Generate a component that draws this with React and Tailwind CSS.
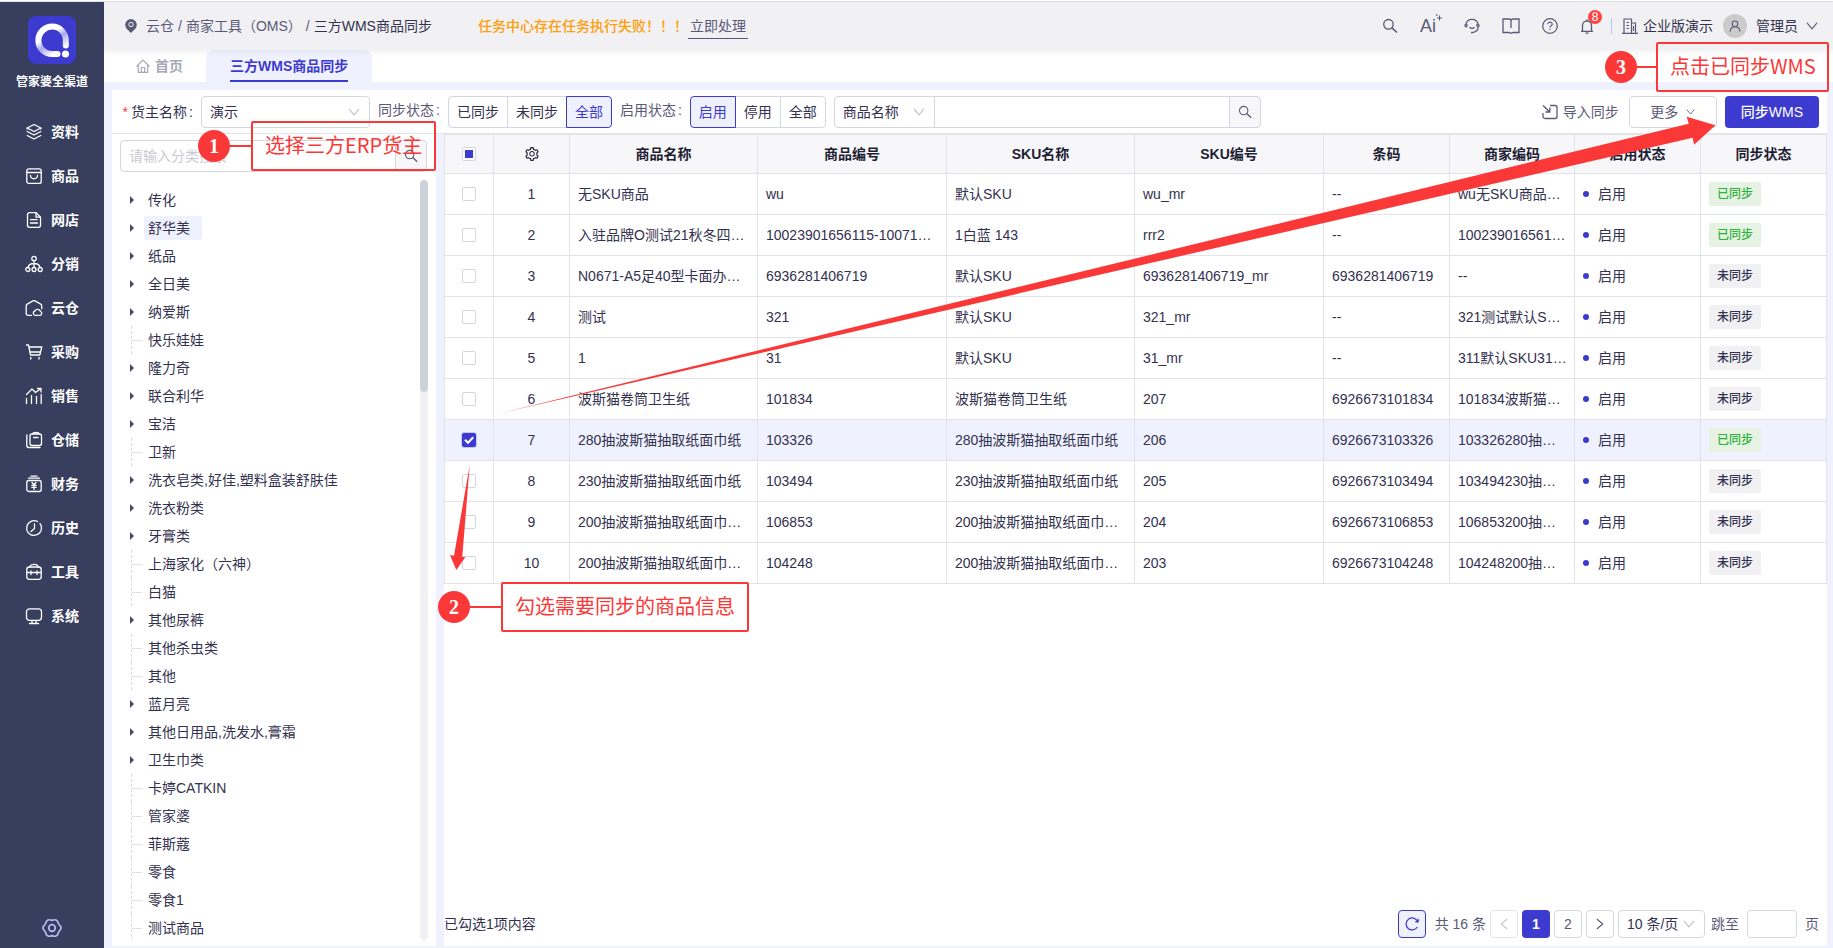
import { useState } from 'react';
import { AiOutlineSetting } from 'react-icons/ai';

const menuItems = [
  { name: '资料', icon: 'layers' },
  { name: '商品', icon: 'goods' },
  { name: '网店', icon: 'shop' },
  { name: '分销', icon: 'share' },
  { name: '云仓', icon: 'cloud' },
  { name: '采购', icon: 'cart' },
  { name: '销售', icon: 'sales' },
  { name: '仓储', icon: 'store' },
  { name: '财务', icon: 'finance' },
  { name: '历史', icon: 'history' },
  { name: '工具', icon: 'tools' },
  { name: '系统', icon: 'system' },
];

const categories = [
  { name: '传化', open: true },
  { name: '舒华美', open: true },
  { name: '纸品', open: true },
  { name: '全日美', open: true },
  { name: '纳爱斯', open: true },
  { name: '快乐娃娃' },
  { name: '隆力奇', open: true },
  { name: '联合利华', open: true },
  { name: '宝洁', open: true },
  { name: '卫新' },
  { name: '洗衣皂类,好佳,塑料盒装舒肤佳', open: true },
  { name: '洗衣粉类', open: true },
  { name: '牙膏类', open: true },
  { name: '上海家化（六神）' },
  { name: '白猫' },
  { name: '其他尿裤', open: true },
  { name: '其他杀虫类' },
  { name: '其他' },
  { name: '蓝月亮', open: true },
  { name: '其他日用品,洗发水,膏霜', open: true },
  { name: '卫生巾类', open: true },
  { name: '卡婷CATKIN' },
  { name: '管家婆' },
  { name: '菲斯蔻' },
  { name: '零食' },
  { name: '零食1' },
  { name: '测试商品' },
];

const columns = ['商品名称', '商品编号', 'SKU名称', 'SKU编号', '条码', '商家编码', '启用状态', '同步状态'];

const rows = [
  { id: 1, cells: ['无SKU商品', 'wu', '默认SKU', 'wu_mr', '--', 'wu无SKU商品…'], synced: true },
  { id: 2, cells: ['入驻品牌O测试21秋冬四…', '10023901656115-10071…', '1白蓝 143', 'rrr2', '--', '100239016561…'], synced: true },
  { id: 3, cells: ['N0671-A5足40型卡面办…', '6936281406719', '默认SKU', '6936281406719_mr', '6936281406719', '--'], synced: false },
  { id: 4, cells: ['测试', '321', '默认SKU', '321_mr', '--', '321测试默认S…'], synced: false },
  { id: 5, cells: ['1', '31', '默认SKU', '31_mr', '--', '311默认SKU31…'], synced: false },
  { id: 6, cells: ['波斯猫卷筒卫生纸', '101834', '波斯猫卷筒卫生纸', '207', '6926673101834', '101834波斯猫…'], synced: false },
  { id: 7, cells: ['280抽波斯猫抽取纸面巾纸', '103326', '280抽波斯猫抽取纸面巾纸', '206', '6926673103326', '103326280抽…'], synced: true },
  { id: 8, cells: ['230抽波斯猫抽取纸面巾纸', '103494', '230抽波斯猫抽取纸面巾纸', '205', '6926673103494', '103494230抽…'], synced: false },
  { id: 9, cells: ['200抽波斯猫抽取纸面巾…', '106853', '200抽波斯猫抽取纸面巾…', '204', '6926673106853', '106853200抽…'], synced: false },
  { id: 10, cells: ['200抽波斯猫抽取纸面巾…', '104248', '200抽波斯猫抽取纸面巾…', '203', '6926673104248', '104248200抽…'], synced: false },
];

const iconShapes = {
  layers: (
    <>
      <path d="M9 1.500 15.800 5 9 8.500 2.200 5Z" />
      <path d="M2.200 8.500 9 12l6.800-3.500" />
      <path d="M2.200 12.500 9 16l6.800-3.500M2.200 5v1M15.800 5v1" />
    </>
  ),
  goods: (
    <>
      <rect x="1.800" y="1.800" width="14.400" height="14.600" rx="2" />
      <path d="M1.800 5.500h14.400M5.500 8.500c.3 4.300 6.700 4.300 7 0" />
    </>
  ),
  shop: (
    <>
      <path d="M11 1.700H4.500a2 2 0 0 0-2 2v10.600a2 2 0 0 0 2 2h9a2 2 0 0 0 2-2V6.200Z" />
      <path d="M11 1.700v4.500h4.500M5.500 8.700h6.500M5.500 12h7" />
    </>
  ),
  share: (
    <>
      <circle cx="9" cy="3.500" r="2.200" />
      <circle cx="2.800" cy="14.500" r="2" />
      <circle cx="9" cy="14.500" r="2" />
      <circle cx="15.200" cy="14.500" r="2" />
      <path d="M9 5.700v6.800M3 12.500C3.500 9.500 6 8.500 9 8.500s5.500 1 6 4" />
    </>
  ),
  cloud: (
    <>
      <path d="M6.500 16.300H3a1.800 1.800 0 0 1-1.800-1.800V6.800a2 2 0 0 1 1-1.700L8 1.900a2 2 0 0 1 2 0l5.700 3.200a2 2 0 0 1 1 1.700v3" />
      <path d="M10.200 16.300a2.200 2.200 0 0 1-.3-4.300 3 3 0 0 1 5.600.5 2 2 0 0 1-.3 3.800Z" />
    </>
  ),
  cart: (
    <>
      <path d="M1.500 2h2l2 10h9.300L16.800 4H4" />
      <path d="M5 9h10" />
      <path d="M5.800 14.300v1.800M14 14.300v1.800" />
    </>
  ),
  sales: (
    <>
      <path d="M1.500 7.500 7 2l3.500 3.500L16 1.500M12.500 1.500H16V5" />
      <path d="M1.500 11.500v5M6.500 8.500v8M11.500 9.500v7M16.200 7.500v9" />
    </>
  ),
  store: (
    <>
      <rect x="5" y="3" width="11.500" height="11.500" rx="2" />
      <path d="M7.500 3c0-2 6.500-2 6.500 0M8.500 6.500h4.500M1.800 4v10.500a2 2 0 0 0 2 2H15" />
    </>
  ),
  finance: (
    <>
      <rect x="1.800" y="5.500" width="14.400" height="11" rx="2" />
      <path d="M3.500 3.200h11M6 1.200h6M7 7.500l2 2.300 2-2.300M9 9.800v4.700M6.800 10.300h4.400M6.800 12.300h4.400" />
    </>
  ),
  history: (
    <>
      <path d="M16.300 7.500A7.400 7.400 0 1 1 12.500 2.500M15 4.500l1.500 3" />
      <path d="M9.500 5v4.500L6 12.500" />
    </>
  ),
  tools: (
    <>
      <rect x="1.800" y="4" width="14.400" height="12.300" rx="2.500" />
      <path d="M5 4c0-3.500 8-3.500 8 0M1.800 9.500h14.400M6 8v3.500M12 8v3.500" />
    </>
  ),
  system: (
    <>
      <rect x="1.500" y="1.800" width="15" height="11.500" rx="3" />
      <path d="M4.500 16.500h9M7 13.500v2.800M11 13.500v2.800" />
    </>
  ),
};

function MenuIcon({ name }) {
  return (
    <svg viewBox="0 0 18 18" className="w-[18px] h-[18px] shrink-0" fill="none" stroke="currentColor" strokeWidth="1.3" strokeLinecap="round" strokeLinejoin="round">
      {iconShapes[name]}
    </svg>
  );
}

function Chevron({ className }) {
  return (
    <svg viewBox="0 0 12 8" className={className} fill="none" stroke="currentColor" strokeWidth="1.1">
      <path d="M1 .8 6 6.800 11 .8" />
    </svg>
  );
}

function SearchIcon({ className }) {
  return (
    <svg viewBox="0 0 16 16" className={className} fill="none" stroke="currentColor" strokeWidth="1.3">
      <circle cx="6.500" cy="6.300" r="4.800" />
      <path d="m10 9.800 5 4.700" strokeWidth="1.600" />
    </svg>
  );
}

function GearIcon({ className }) {
  return (
    <svg viewBox="0 0 20 20" className={className} fill="none" stroke="currentColor" strokeWidth="1.700" strokeLinejoin="round">
      <path d="M16.600 13.800Q15.700 19.900 10 17.600 4.300 19.900 3.400 13.800-1.400 10 3.400 6.200 4.300.1 10 2.400 15.700.1 16.600 6.200 21.400 10 16.600 13.800Z" />
      <circle cx="10" cy="10" r="3.300" />
    </svg>
  );
}

function Logo() {
  return (
    <svg viewBox="0 0 48 48" className="w-12 h-12">
      <defs>
        <linearGradient id="ring" x1="0" y1="0.1" x2="0.6" y2="1">
          <stop offset="0.35" stopColor="#fff" />
          <stop offset="0.6" stopColor="#a9a8ee" />
          <stop offset="1" stopColor="#fff" />
        </linearGradient>
      </defs>
      <rect width="48" height="48" rx="8" fill="#3d3acf" />
      <path d="M37.800 29.500V24.500A13.700 13.700 0 1 0 24 38h5.500" fill="none" stroke="url(#ring)" strokeWidth="6" strokeLinecap="round" />
      <circle cx="37.500" cy="38" r="3.500" fill="#fff" />
    </svg>
  );
}

function Sidebar() {
  return (
    <aside className="flex w-26 shrink-0 flex-col items-center bg-[#373e5e] pt-[14px] pb-[10px] text-white">
      <Logo />
      <div className="mt-2 text-xs leading-5 font-bold">管家婆全渠道</div>
      <nav className="mt-[18px] w-full">
        {menuItems.map((item) => (
          <a key={item.name} href="#" className="flex h-11 items-center gap-2 pl-[25px] text-sm font-bold">
            <MenuIcon name={item.icon} />
            {item.name}
          </a>
        ))}
      </nav>
      <button type="button" aria-label="设置" className="mt-auto text-[#b4bcf5]">
        <GearIcon className="h-5 w-5" />
      </button>
    </aside>
  );
}

function HeaderBar() {
  return (
    <header className="relative z-10 flex h-12 shrink-0 items-center bg-[#f1f1f3] pr-[15px] pl-[21px] text-sm text-[#5b5978] shadow-[0_2px_6px_rgba(0,0,0,0.06)]">
      <svg viewBox="0 0 12 14" className="h-[14px] w-3" fill="#5b5978">
        <path d="M6 0a5.800 5.800 0 0 1 5.800 5.700C11.800 9.500 8 11.500 6 14 4 11.500.2 9.500.2 5.700A5.800 5.800 0 0 1 6 0Z" />
        <circle cx="6" cy="5.500" r="2.200" fill="none" stroke="#f1f1f3" />
      </svg>
      <div className="ml-[9px] flex gap-1 whitespace-nowrap">
        <a href="#">云仓</a>
        <span>/</span>
        <a href="#">商家工具（OMS）</a>
        <span>/</span>
        <span className="text-[#33314f]">三方WMS商品同步</span>
      </div>
      <div className="ml-[46px] flex items-center whitespace-nowrap">
        <span className="font-medium text-[#ff9d0a]">任务中心存在任务执行失败！！！</span>
        <a href="#" className="border-b border-[#5b5978] px-[2px] leading-6">立即处理</a>
      </div>

      <div className="ml-auto flex items-center gap-[22px]">
        <button type="button" aria-label="搜索"><SearchIcon className="h-4 w-4" /></button>
        <button type="button" className="flex items-start text-lg leading-6">
          Ai
          <svg viewBox="0 0 6 8" className="h-2 w-[6px]" stroke="currentColor" fill="none">
            <path d="M3.500 1.500v5M1 4h5M.8 0v2" />
          </svg>
        </button>
        <button type="button" aria-label="客服">
          <svg viewBox="0 0 16 16" className="h-4 w-4" fill="none" stroke="currentColor" strokeWidth="1.300">
            <path d="M1.800 6.500a6.300 6.300 0 0 1 12.400 0M1 7.500c0-2 2.500-1.500 2 .3S1 9 1 7.500ZM15 7.500c0-2-2.500-1.500-2 .3s2 1.200 2-.3ZM14.200 9.500c-.5 3-2.700 4.700-5.700 5H7M5.500 9.300c1.300 1.500 3.700 1.500 5 0" />
          </svg>
        </button>
        <button type="button" aria-label="手册">
          <svg viewBox="0 0 18 16" className="h-4 w-[18px]" fill="none" stroke="currentColor" strokeWidth="1.300">
            <path d="M1 1h5.500C8 1 9 1.500 9 2.500 9 1.500 10 1 11.500 1H17v13.500h-6l-2 .8-2-.8H1ZM9 2.500V10" />
          </svg>
        </button>
        <button type="button" aria-label="帮助">
          <svg viewBox="0 0 16 16" className="h-4 w-4" fill="none" stroke="currentColor" strokeWidth="1.200">
            <circle cx="8" cy="8" r="7.300" />
            <path d="M5.800 6.300C5.800 3.300 10.300 3.500 10.200 6.200 10.100 7.800 8 7.800 8 9.600M8 10.800v1.300" />
          </svg>
        </button>
        <button type="button" aria-label="通知" className="relative">
          <svg viewBox="0 0 14 16" className="h-4 w-[14px]" fill="none" stroke="currentColor" strokeWidth="1.300">
            <path d="M1 13.300h12M2.500 13V7.500a4.500 4.500 0 0 1 9 0V13M7 1.200V3M5.500 15.200h3" />
          </svg>
          <span className="absolute -top-2 left-2 grid h-[14px] w-[14px] place-items-center rounded-full bg-[#fb4444] text-xs leading-none text-white">8</span>
        </button>
      </div>
      <div className="ml-[17px] h-4 w-px bg-[#bcc3f5]" />
      <svg viewBox="0 0 16 16" className="ml-[10px] h-4 w-4" fill="none" stroke="currentColor" strokeWidth="1.200">
        <path d="M0 15.300h16M2 15V1h7.500v14M9.500 5h4v10M4.500 4.500H7M4.500 7.500H7M4.500 10.500H7M11.500 8v5" />
      </svg>
      <span className="ml-[5px] text-[#33314f]">企业版演示</span>
      <span className="ml-[10px] grid h-6 w-6 place-items-center rounded-full bg-[#cbcbcb]">
        <svg viewBox="0 0 12 12" className="h-3 w-3" fill="none" stroke="currentColor" strokeWidth="1.100">
          <circle cx="6" cy="3.800" r="2.800" />
          <path d="M1 11.700c.3-3 2.300-5 5-5s4.700 2 5 5" />
        </svg>
      </span>
      <span className="ml-[9px] text-[#33314f]">管理员</span>
      <Chevron className="ml-2 h-2 w-3" />
    </header>
  );
}

function TabBar() {
  return (
    <div className="flex h-8 shrink-0 items-stretch bg-white text-sm font-bold">
      <a href="#" className="flex w-[102px] items-center gap-[5px] pl-8 text-[#a7a8b8]">
        <svg viewBox="0 0 14 14" className="h-[14px] w-[14px]" fill="none" stroke="currentColor" strokeWidth="1.200">
          <path d="M.5 7.500 7 1l6.500 6.500M2.300 6v7.300h9.400V6M5.300 13V8.500h3.400V13" />
        </svg>
        首页
      </a>
      <a href="#" className="flex rounded-t-lg bg-[#eff1ff] px-6 text-[#3d3acf]">
        <span className="border-b-2 border-[#3d3acf] leading-8">三方WMS商品同步</span>
      </a>
    </div>
  );
}

function ButtonGroup({ label, options, value, onChange }) {
  return (
    <div role="group" aria-label={label} className="flex">
      {options.map((option) => (
        <button
          key={option}
          type="button"
          onClick={() => onChange(option)}
          className={`-ml-px h-8 border px-2 first:ml-0 first:rounded-l last:rounded-r ${
            value === option ? 'relative border-[#3d3acf] bg-[#eff1ff] text-[#3d3acf]' : 'border-[#d5d5df] bg-white text-[#33314f]'
          }`}
        >
          {option}
        </button>
      ))}
    </div>
  );
}

function FilterBar() {
  const [sync, setSync] = useState('全部');
  const [enabled, setEnabled] = useState('启用');

  return (
    <div className="flex h-11 shrink-0 items-center border-b border-[#e3e3ea] bg-white px-2 text-sm whitespace-nowrap text-[#5b5978]">
      <label htmlFor="owner" className="flex w-[81px] gap-[2px] text-[#33314f]">
        <span className="mr-px w-2 text-right text-[#f53f3f]">*</span>
        货主名称<span>:</span>
      </label>
      <div className="relative">
        <select id="owner" className="h-8 w-[169px] appearance-none rounded border border-[#d5d5df] bg-white px-2 text-[#33314f]">
          <option>演示</option>
        </select>
        <Chevron className="pointer-events-none absolute top-3 right-[10px] h-2 w-3 text-[#c0c0ca]" />
      </div>
      <span className="mr-2 ml-2 flex gap-[2px] pb-1">同步状态<span>:</span></span>
      <ButtonGroup label="同步状态" options={['已同步', '未同步', '全部']} value={sync} onChange={setSync} />
      <span className="mr-2 ml-2 flex gap-[2px] pb-1">启用状态<span>:</span></span>
      <ButtonGroup label="启用状态" options={['启用', '停用', '全部']} value={enabled} onChange={setEnabled} />
      <div className="ml-2 flex">
        <div className="relative">
          <select aria-label="搜索字段" className="h-8 w-[101px] appearance-none rounded-l border border-[#d5d5df] bg-white px-2 text-[#33314f]">
            <option>商品名称</option>
          </select>
          <Chevron className="pointer-events-none absolute top-3 right-[10px] h-2 w-3 text-[#c0c0ca]" />
        </div>
        <input type="text" aria-label="商品搜索" className="-ml-px h-8 w-[296px] border border-[#d5d5df] bg-white px-2" />
        <button type="button" aria-label="查询" className="-ml-px grid h-8 w-8 place-items-center rounded-r border border-[#d5d5df] bg-[#f7f7fa]">
          <SearchIcon className="h-[14px] w-[14px]" />
        </button>
      </div>
      <div className="ml-auto flex items-center">
        <button type="button" className="flex items-center gap-[5px]">
          <svg viewBox="0 0 16 16" className="h-4 w-4" fill="none" stroke="currentColor" strokeWidth="1.300">
            <path d="M8 1.500h5a2 2 0 0 1 2 2v9a2 2 0 0 1-2 2H3a2 2 0 0 1-2-2V9M1 1.500l6.500 6.300M7.800 3.500V8H3.500" />
          </svg>
          导入同步
        </button>
        <button type="button" className="ml-[10px] flex h-8 w-22 items-center justify-center gap-2 rounded border border-[#d5d5df] bg-white">
          更多
          <Chevron className="h-[6px] w-[9px]" />
        </button>
        <button type="button" className="ml-2 h-8 rounded bg-[#3d3acf] px-4 font-medium text-white">同步WMS</button>
      </div>
    </div>
  );
}

function CategoryPanel() {
  return (
    <section className="flex w-[324px] shrink-0 flex-col bg-white px-2 pt-[6px] pb-[6px] text-sm text-[#33314f]">
      <div className="flex w-[307px]">
        <input
          type="text"
          aria-label="分类搜索"
          placeholder="请输入分类搜索"
          className="h-8 min-w-0 flex-1 rounded-l border border-[#d5d5df] px-2 text-sm placeholder-[#c9c9d3]"
        />
        <button type="button" aria-label="搜索分类" className="-ml-px grid h-8 w-8 place-items-center rounded-r border border-[#d5d5df] bg-[#f7f7fa] text-[#5b5978]">
          <SearchIcon className="h-[14px] w-[14px]" />
        </button>
      </div>
      <div className="mt-2 flex min-h-0 flex-1">
        <ul className="flex-1 overflow-hidden pt-[6px]">
          {categories.map((item) => (
            <li key={item.name} className="flex h-7 items-center">
              <span className="flex h-full w-6 items-center pl-[10px]">
                {item.open ? (
                  <svg viewBox="0 0 4 8" className="h-2 w-1" fill="#4b4967">
                    <path d="M0 0 4 4 0 8Z" />
                  </svg>
                ) : (
                  <span className="ml-px flex h-full w-[11px] items-center border-l border-dashed border-[#dcdce2]">
                    <span className="w-full border-t border-dashed border-[#dcdce2]" />
                  </span>
                )}
              </span>
              <span className={`rounded-xs pr-3 pl-1 leading-6 ${item.name === '舒华美' ? 'bg-[#eff1ff]' : ''}`}>{item.name}</span>
            </li>
          ))}
        </ul>
        <div className="w-2 rounded-full bg-[#f0f0f5]">
          <div className="h-[212px] rounded-full bg-[#ccd2da]" />
        </div>
      </div>
    </section>
  );
}

function RowCheckbox({ label, checked, mixed, onChange }) {
  return (
    <label className="relative mx-auto block h-[14px] w-[14px]">
      <input
        type="checkbox"
        aria-label={label}
        checked={checked}
        onChange={onChange}
        className={`block h-[14px] w-[14px] appearance-none rounded-xs border ${
          checked ? 'border-[#3d3acf] bg-[#3d3acf] ring-1 ring-[#c5c7f7]' : 'border-[#d5d5df] bg-white'
        }`}
      />
      {checked && (
        <svg viewBox="0 0 14 14" className="pointer-events-none absolute inset-0" fill="none" stroke="#fff" strokeWidth="2">
          <path d="m3 6.800 3 3 5.200-5.600" />
        </svg>
      )}
      {mixed && <span className="pointer-events-none absolute inset-[3px] bg-[#3d3acf]" />}
    </label>
  );
}

function ProductTable({ selected, onToggle }) {
  return (
    <table className="w-full table-fixed border-separate border-spacing-0 border-t border-l border-[#e3e3ea] text-sm text-[#33314f]">
      <colgroup>
        <col className="w-[49px]" />
        <col className="w-[76px]" />
        <col className="w-[188px]" />
        <col className="w-[189px]" />
        <col className="w-[188px]" />
        <col className="w-[189px]" />
        <col className="w-[126px]" />
        <col className="w-[125px]" />
        <col className="w-[126px]" />
        <col className="w-[126px]" />
      </colgroup>
      <thead>
        <tr className="h-[39px] bg-[#f7f7fa] text-[#1e1d33]">
          <th className="border-r border-b border-[#e3e3ea]">
            <RowCheckbox label="全选" checked={false} mixed={selected.length > 0} onChange={() => {}} />
          </th>
          <th className="border-r border-b border-[#e3e3ea]">
            <AiOutlineSetting className="mx-auto h-4 w-4" />
          </th>
          {columns.map((name) => (
            <th key={name} className="border-r border-b border-[#e3e3ea] font-bold">{name}</th>
          ))}
        </tr>
      </thead>
      <tbody>
        {rows.map((row) => (
          <tr key={row.id} className={`h-[41px] ${selected.includes(row.id) ? 'bg-[#eff1ff]' : ''}`}>
            <td className="border-r border-b border-[#e3e3ea]">
              <RowCheckbox label={`选择第${row.id}行`} checked={selected.includes(row.id)} onChange={() => onToggle(row.id)} />
            </td>
            <td className="border-r border-b border-[#e3e3ea] text-center">{row.id}</td>
            {row.cells.map((cell, index) => (
              <td key={index} className="border-r border-b border-[#e3e3ea] pl-2 whitespace-nowrap">{cell}</td>
            ))}
            <td className="border-r border-b border-[#e3e3ea] pl-2">
              <span className="flex items-center gap-[9px]">
                <span className="h-[6px] w-[6px] rounded-full bg-[#3d3acf]" />
                启用
              </span>
            </td>
            <td className="border-r border-b border-[#e3e3ea] pl-2">
              <span className={`block w-[52px] rounded-xs text-center text-xs leading-6 font-medium ${row.synced ? 'bg-[#e5f2e4] text-[#31b33a]' : 'bg-[#f1f1f4]'}`}>
                {row.synced ? '已同步' : '未同步'}
              </span>
            </td>
          </tr>
        ))}
      </tbody>
    </table>
  );
}

function Pagination({ count }) {
  return (
    <div className="mt-auto flex items-center pr-2 pb-2 text-sm text-[#5b5978]">
      <span className="text-[#33314f]">已勾选{count}项内容</span>
      <button type="button" aria-label="刷新" className="ml-auto grid h-7 w-7 place-items-center rounded border border-[#3d3acf] bg-[#eff1ff] text-[#3d3acf]">
        <svg viewBox="0 0 14 14" className="h-[14px] w-[14px]" fill="none" stroke="currentColor" strokeWidth="1.200">
          <path d="M12.300 10A6 6 0 1 1 12.500 4.300M13.200 1.800v3h-3" />
        </svg>
      </button>
      <span className="mr-1 ml-[9px]">共 16 条</span>
      <div className="flex gap-1">
        <button type="button" disabled aria-label="上一页" className="grid h-7 w-7 place-items-center rounded border border-[#e3e3ea] text-[#c5c5cf]">
          <Chevron className="h-2 w-3 rotate-90" />
        </button>
        <button type="button" className="h-7 w-7 rounded bg-[#3d3acf] font-bold text-white">1</button>
        <button type="button" className="h-7 w-7 rounded border border-[#d5d5df]">2</button>
        <button type="button" aria-label="下一页" className="grid h-7 w-7 place-items-center rounded border border-[#d5d5df]">
          <Chevron className="h-2 w-3 -rotate-90" />
        </button>
        <div className="relative">
          <select aria-label="每页条数" className="h-7 w-[87px] appearance-none rounded border border-[#d5d5df] bg-white px-2 text-[#33314f]">
            <option>10 条/页</option>
          </select>
          <Chevron className="pointer-events-none absolute top-[10px] right-[10px] h-2 w-3 text-[#c0c0ca]" />
        </div>
      </div>
      <label htmlFor="jump" className="mr-2 ml-[6px]">跳至</label>
      <input id="jump" type="text" className="h-7 w-[50px] rounded border border-[#d5d5df] px-2" />
      <span className="ml-2">页</span>
    </div>
  );
}

// Numbered step: a round badge, a connector and an outlined hint
function Callout({ number, className, lineClass, boxClass, children }) {
  return (
    <div className={`pointer-events-none absolute z-30 flex items-center text-[#fb3838] ${className}`}>
      <span className="grid h-8 w-8 place-items-center rounded-full bg-[#fb3838] font-['Liberation_Serif',serif] text-xl leading-none font-bold text-white">{number}</span>
      <span className={`h-[2px] bg-[#fb3838] ${lineClass}`} />
      <span className={`h-[50px] rounded-xs border-2 border-[#fb3838] pt-[6px] font-['Noto_Sans_CJK_SC',sans-serif] text-xl leading-8 whitespace-nowrap ${boxClass}`}>{children}</span>
    </div>
  );
}

function Guide() {
  return (
    <>
      <svg viewBox="0 0 1833 948" className="pointer-events-none absolute top-0 left-0 z-20 h-[948px] w-[1833px]">
        <defs>
          <linearGradient id="tail" gradientUnits="userSpaceOnUse" x1="493" y1="415" x2="560" y2="399">
            <stop offset="0" stopColor="#fb3838" stopOpacity="0.4" />
            <stop offset="1" stopColor="#fb3838" />
          </linearGradient>
        </defs>
        <path fill="url(#tail)" d="M493 414 1688.700 122.700 1686.700 115.700 1715.500 124.300 1694 143.700 1692.700 136.700Z" />
        <path fill="#fb3838" d="M469.700 464 462.300 555.700 465.300 556.300 456.300 569 450 554 454 554.800Z" />
      </svg>
      <Callout number={1} className="top-[120px] left-[198px]" lineClass="w-[21px]" boxClass="w-[185px] pl-3">选择三方ERP货主</Callout>
      <Callout number={2} className="top-[581px] left-[438px]" lineClass="w-[31px]" boxClass="w-[248px] pl-3">勾选需要同步的商品信息</Callout>
      <Callout number={3} className="top-[41px] left-[1605px]" lineClass="w-[19px]" boxClass="w-[173px] pl-3">点击已同步WMS</Callout>
    </>
  );
}

export default function App() {
  const [selected, setSelected] = useState([7]);

  const toggleRow = (id) => {
    setSelected(selected.includes(id) ? selected.filter((item) => item !== id) : [...selected, id]);
  };

  return (
    <div className="relative flex h-screen overflow-hidden border-t border-white bg-[#eff1ff] font-['Liberation_Sans','Noto_Sans_CJK_SC',sans-serif]">
      <div className="flex min-w-0 flex-1 border-t border-[#e0e0e0]">
        <Sidebar />
        <div className="flex min-w-0 flex-1 flex-col">
          <HeaderBar />
          <TabBar />
          <main className="flex min-h-0 flex-1 flex-col pt-2 pr-[6px] pb-[2px] pl-2">
            <FilterBar />
            <div className="flex min-h-0 flex-1 gap-2">
              <CategoryPanel />
              <section className="flex min-w-0 flex-1 flex-col bg-white">
                <ProductTable selected={selected} onToggle={toggleRow} />
                <Pagination count={selected.length} />
              </section>
            </div>
          </main>
        </div>
      </div>
      <Guide />
    </div>
  );
}
